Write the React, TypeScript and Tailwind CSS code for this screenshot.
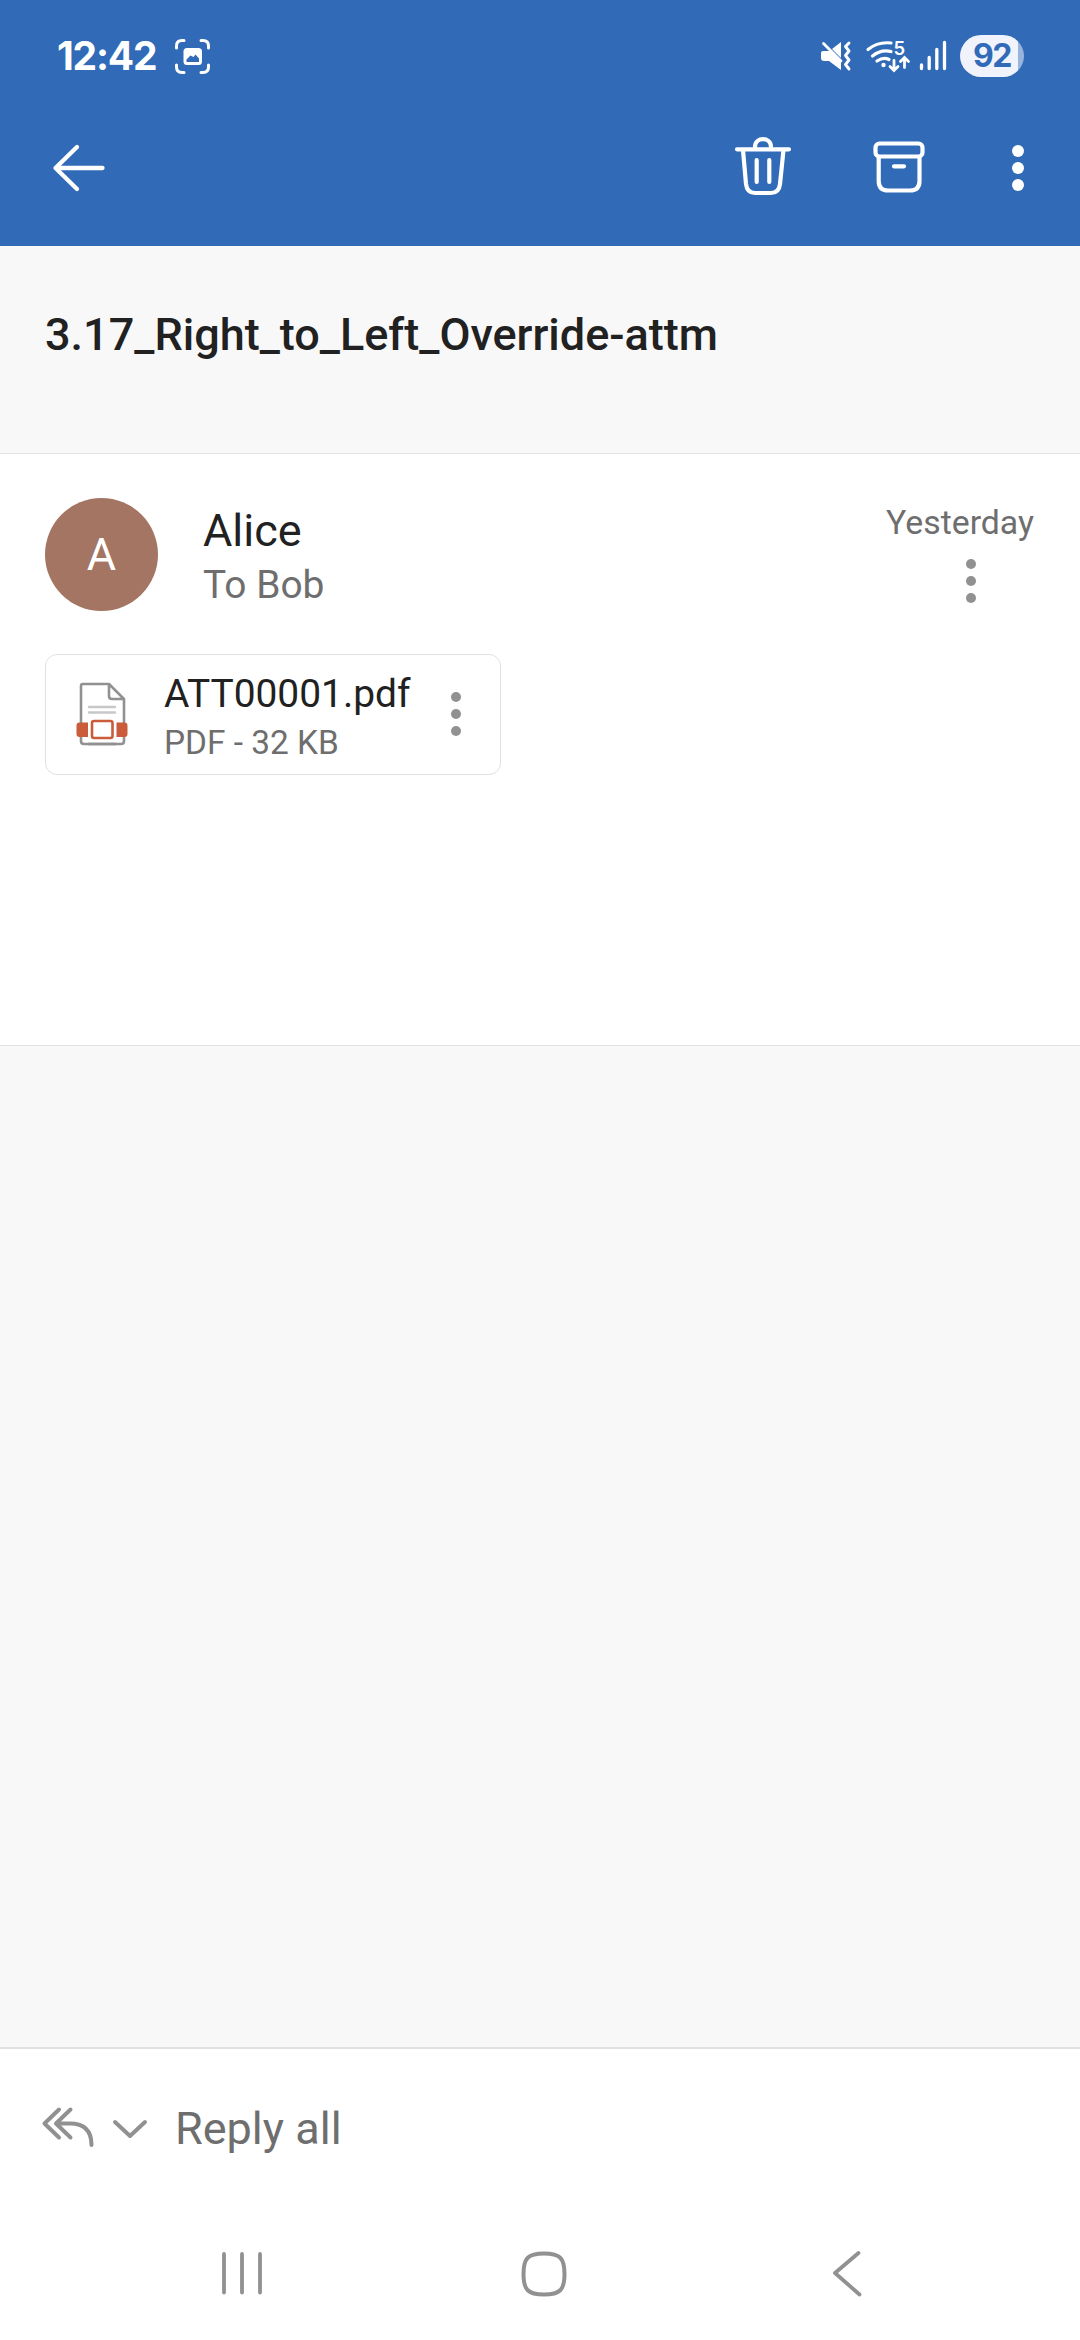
import React from "react";

function Dots({ r, gap, box, className }: { r: number; gap: number; box: number; className: string }) {
  const c = box / 2;
  return (
    <svg width={2 * r + 2} height={box} viewBox={`${-r - 1} ${-c} ${2 * r + 2} ${box}`} className={className} fill="currentColor">
      <circle cx="0" cy={-gap} r={r} />
      <circle cx="0" cy="0" r={r} />
      <circle cx="0" cy={gap} r={r} />
    </svg>
  );
}

function StatusBar() {
  return (
    <div className="flex h-[112px] items-center pr-[56px] pl-[57px]">
      <span className="w-[117px] whitespace-nowrap font-[Inter] text-[39px] leading-[112px] font-bold tracking-[-1.2px]">12:42</span>
      <svg width="37" height="37" viewBox="0 0 37 37" className="shrink-0" fill="none" stroke="currentColor" strokeWidth="3" strokeLinecap="round">
        <path d="M2.500 10V8Q2.500 2.500 8 2.500H10M27 2.500H29Q34.500 2.500 34.500 8V10M34.500 27V29Q34.500 34.500 29 34.500H27M10 34.500H8Q2.500 34.500 2.500 29V27" />
        <path fillRule="evenodd" fill="currentColor" stroke="none" d="M13 10H24.500Q28 10 28 13.500V23.500Q28 27 24.500 27H13Q9.500 27 9.500 23.500V13.500Q9.500 10 13 10ZM12.500 24H25V20.500L21.500 16.500L19.500 19L16.500 17.500L12.500 21.500Z" />
      </svg>
      <div className="flex-1" />
      <svg width="32" height="32" viewBox="820 40 32 32" className="mr-[13px]" fill="currentColor">
        <path d="M821 53Q821 51 823 51H830L841 62V70L829 61H824Q821 61 821 58Z" />
        <path d="M832 49L841 42V58Z" />
        <path d="M823.500 43.500L841 61" stroke="currentColor" strokeWidth="2.800" strokeLinecap="round" />
        <path d="M849 43L845.500 46.500L849 51L845.500 55.500L849 60L845.500 64.500L849 69" fill="none" stroke="currentColor" strokeWidth="2.900" strokeLinecap="round" strokeLinejoin="round" />
      </svg>
      <svg width="46" height="50" viewBox="865 31.500 46 50" className="mr-[7px]" fill="none" stroke="currentColor" strokeWidth="3.200" strokeLinecap="round">
        <path d="M868 50Q878 42 891 43.500M872.500 56.500Q881 49.500 891 52M877 61.500Q883.500 57 889 60" />
        <circle cx="883.500" cy="65.500" r="2.200" fill="currentColor" stroke="none" />
        <path d="M894 61V70M890 67L894 71L898 67M904.500 68V58.500M900.500 62L904.500 58L908.500 62" strokeWidth="2.800" />
        <text x="893.500" y="55.500" stroke="none" fill="currentColor" className="font-[Inter] text-[18.500px] font-semibold">5</text>
      </svg>
      <svg width="30" height="32" viewBox="917.500 40 30 32" className="mr-[12px]" stroke="currentColor" strokeWidth="3.300" strokeLinecap="round">
        <path d="M921 65V68.500M928.700 57.500V68.500M936.300 49.500V68.500M944 42.500V68.500" />
      </svg>
      <div className="flex h-[42px] w-[64px] items-center overflow-hidden rounded-full bg-[linear-gradient(90deg,#f0f3fb_58px,#98b4dd_58px)] pl-[13px] font-[Inter] text-[32px] leading-[42px] font-bold tracking-[-1.5px] text-[#316ab7]">
        92
      </div>
    </div>
  );
}

function Toolbar() {
  return (
    <div className="flex h-[112px] items-center pr-[55px] pl-[51px]">
      <svg width="56" height="60" viewBox="51 138 56 60" fill="none" stroke="currentColor" strokeWidth="4.300" strokeLinecap="round" strokeLinejoin="round">
        <path d="M102.500 168H56M77 147L55.500 168L77 189" />
      </svg>
      <div className="flex-1" />
      <svg width="60" height="64" viewBox="733 136 60 64" className="mr-[78px]" fill="none" stroke="currentColor" strokeWidth="4.200" strokeLinecap="round">
        <path d="M737 149.300H789M755 148.500V147C755 136.500 771 136.500 771 147V148.500M743 150L746 184Q747 193 755 193H771Q779 193 780 184L783.500 150M756.700 160V182M769.300 160V182" />
      </svg>
      <svg width="56" height="60" viewBox="871 138 56 60" className="mr-[84px]" fill="none" stroke="currentColor" strokeWidth="4.200" strokeLinecap="round">
        <rect x="875.500" y="143.500" width="47" height="13" rx="4" />
        <path d="M878.700 157V181Q878.700 190.500 888 190.500H910Q919.500 190.500 919.500 181V157M894 166.300H904" />
      </svg>
      <Dots r={6} gap={17} box={60} className="" />
    </div>
  );
}

function Attachment() {
  return (
    <div className="mt-[43px] ml-[45px] flex h-[121px] w-[456px] items-center rounded-[12px] border border-[#e1e1e1]">
      <svg width="56" height="66" viewBox="74 681 56 66" className="mb-[1px] ml-[28px] shrink-0" fill="none">
        <path d="M83 684H109L124 699V741Q124 744 121 744H84Q81 744 81 741V686Q81 684 83 684ZM109 684V696Q109 699 112 699H124" stroke="#919191" strokeWidth="2.600" strokeLinejoin="round" />
        <path d="M89 707H115M89 712.500H115" stroke="#c8c8c8" strokeWidth="2.400" strokeLinecap="round" />
        <path d="M88 718H116V742H88Z" fill="#fff" />
        <path d="M79.500 722.500H88V737H79.500Q76.500 737 76.500 734V725.500Q76.500 722.500 79.500 722.500ZM116.500 722.500H124.500Q127.500 722.500 127.500 725.500V734Q127.500 737 124.500 737H116.500Z" fill="#ca5c3c" />
        <path d="M88 744H116" stroke="#919191" strokeWidth="2.600" />
        <rect x="92" y="721" width="20.500" height="17" rx="2" stroke="#ca5c3c" strokeWidth="2.600" />
      </svg>
      <div className="ml-[34px] w-[286px] pt-[6px] whitespace-nowrap">
        <div className="text-[38.900px] leading-[50px] text-[#212121]">ATT00001.pdf</div>
        <div className="text-[33.400px] leading-[47px] text-[#6e6e6e]">PDF - 32 KB</div>
      </div>
      <Dots r={5} gap={17} box={60} className="mb-[1px] text-[#919191]" />
    </div>
  );
}

export default function App() {
  return (
    <div className="flex h-[2340px] w-[1080px] flex-col overflow-hidden bg-[#f8f8f8] font-[Roboto,sans-serif]">
      <header className="h-[246px] shrink-0 bg-[#316ab7] text-white">
        <StatusBar />
        <Toolbar />
      </header>
      <h1 className="h-[207px] shrink-0 px-[45px] pt-[62px] text-[45px] leading-[54px] font-medium text-[#212121]">3.17_Right_to_Left_Override-attm</h1>
      <section className="h-[593px] shrink-0 border-y border-[#e1e1e1] bg-white pt-[44px]">
        <div className="flex h-[113px] pr-[46px] pl-[45px]">
          <div className="flex h-[113px] w-[113px] items-center justify-center rounded-full bg-[#a37562] text-[45px] text-white">A</div>
          <div className="ml-[45px] flex-1 pt-[6px]">
            <div className="text-[45px] leading-[54px] text-[#212121]">Alice</div>
            <div className="text-[38.900px] leading-[54px] text-[#6e6e6e]">To Bob</div>
          </div>
          <div className="flex flex-col items-end">
            <div className="pt-[5px] text-[33.800px] leading-[40px] text-[#6e6e6e]">Yesterday</div>
            <Dots r={5} gap={17} box={60} className="mt-[8px] mr-[57px] text-[#919191]" />
          </div>
        </div>
        <Attachment />
      </section>
      <div className="flex-1" />
      <footer className="h-[293px] shrink-0 border-t-2 border-[#e1e1e1] bg-white">
        <div className="flex h-[160px] items-center pl-[41px] text-[#919191]">
          <svg width="56" height="50" viewBox="41 2104 56 50" className="mt-[-1px]" fill="none" stroke="currentColor" strokeWidth="4" strokeLinecap="round" strokeLinejoin="round">
            <path d="M59 2109.500L44.500 2123.500L59 2137.500M70.500 2109.500L56 2123.500L70.500 2137.500M57 2123.500H70Q91.500 2123.500 91.500 2145" />
          </svg>
          <svg width="38" height="24" viewBox="111 2117 38 24" className="ml-[14px]" fill="none" stroke="currentColor" strokeWidth="4" strokeLinecap="round" strokeLinejoin="round">
            <path d="M115 2122L130 2136L145 2122" />
          </svg>
          <span className="ml-[26px] text-[45px] leading-[54px] text-[#6e6e6e]">Reply all</span>
        </div>
        <nav className="flex h-[130px] items-center pl-[220px] text-[#919191]">
          <svg width="44" height="52" viewBox="220 2248 44 52" fill="none" stroke="currentColor" strokeWidth="3.800" strokeLinecap="round">
            <path d="M224 2254V2292.500M242 2254V2292.500M260 2254V2292.500" />
          </svg>
          <svg width="52" height="52" viewBox="518 2248 52 52" className="ml-[254px]" fill="none" stroke="currentColor" strokeWidth="4">
            <path d="M544 2253.500C560 2253.500 564.500 2258 564.500 2274S560 2294.500 544 2294.500S523.500 2290 523.500 2274S528 2253.500 544 2253.500Z" />
          </svg>
          <svg width="34" height="52" viewBox="830 2248 34 52" className="ml-[260px]" fill="none" stroke="currentColor" strokeWidth="3.800" strokeLinecap="round" strokeLinejoin="round">
            <path d="M858.500 2253L835 2273L859.500 2294.500" />
          </svg>
        </nav>
      </footer>
    </div>
  );
}
